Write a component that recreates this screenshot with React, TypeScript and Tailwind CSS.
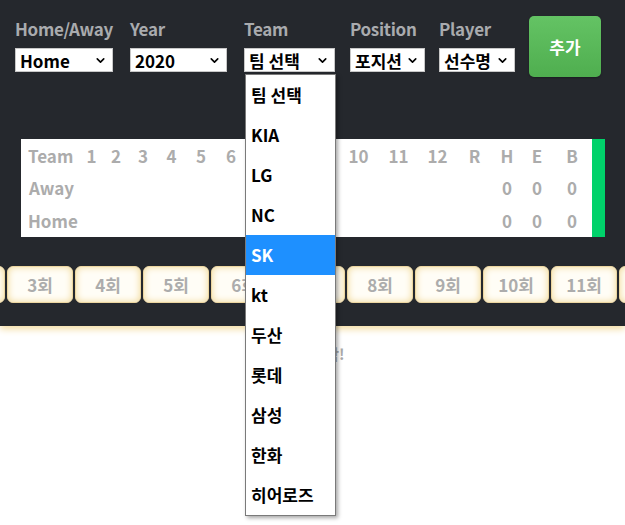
import { ChevronDown } from 'lucide-react'

const teams = ['팀 선택', 'KIA', 'LG', 'NC', 'SK', 'kt', '두산', '롯데', '삼성', '한화', '히어로즈']
const innings = ['1회', '2회', '3회', '4회', '5회', '6회', '7회', '8회', '9회', '10회', '11회', '12회']
const headers = ['1', '2', '3', '4', '5', '6', '7', '8', '9', '10', '11', '12', 'R', 'H', 'E', 'B']

const FakeSelect = ({ value }: { value: string }) => (
  <div className="w-full h-6 bg-white border border-[#c8c8c8] flex items-center justify-between pl-[4px] pr-[5px] text-black text-[17px] leading-none">
    <span>{value}</span>
    <ChevronDown size={13} strokeWidth={3} className="shrink-0" />
  </div>
)

const Field = ({ label, children, className }: { label: string; children: React.ReactNode; className: string }) => (
  <div className={`flex flex-col gap-[7px] shrink-0 ${className}`}>
    <span className="text-[17px] leading-[24px] text-[#a9abae] whitespace-nowrap tracking-[-0.3px]">{label}</span>
    {children}
  </div>
)

const App = () => {
  return (
    <div className="w-[625px] h-[525px] overflow-hidden bg-white font-['Noto_Sans_CJK_KR',sans-serif] font-bold">
      <div className="bg-[#25282d] h-[326px] shadow-[0_3px_7px_#f3dca0] relative">
        {/* filters */}
        <div className="flex items-start pl-[15px] pt-[17px]">
          <Field label="Home/Away" className="w-[98px] mr-[17px]">
            <FakeSelect value="Home" />
          </Field>
          <Field label="Year" className="w-[97px] mr-[17px]">
            <FakeSelect value="2020" />
          </Field>
          <Field label="Team" className="w-[91px] mr-[15px] relative z-20">
            <FakeSelect value="팀 선택" />
            <ul className="absolute left-[1px] top-[57px] w-[91px] bg-white border border-[#7a7a7a] shadow-[2px_2px_4px_rgba(0,0,0,0.35)]">
              {teams.map(t => (
                <li
                  key={t}
                  className={`h-10 flex items-center pl-[5px] text-[17px] ${t === 'SK' ? 'bg-[#1e90ff] text-white' : 'text-black'}`}
                >
                  {t}
                </li>
              ))}
            </ul>
          </Field>
          <Field label="Position" className="w-[75px] mr-[14px]">
            <FakeSelect value="포지션" />
          </Field>
          <Field label="Player" className="w-[76px] mr-[14px]">
            <FakeSelect value="선수명" />
          </Field>
          <button className="mt-[-1px] w-[72px] h-[61px] rounded-[5px] bg-gradient-to-b from-[#64c364] to-[#4fae4f] text-white text-[17px] shadow-[0_1px_2px_rgba(0,0,0,0.3)]">
            추가
          </button>
        </div>

        {/* scoreboard */}
        <div className="ml-[21px] mt-[62px] w-[584px] flex bg-white text-[#acacac] text-[17px]">
          <div className="grid grid-cols-[59px_23px_26px_28px_29px_30px_30px_29px_30px_33px_41px_39px_39px_35px_30px_30px_40px] auto-rows-[32.7px] items-center">
            <span className="pl-[7px]">Team</span>
            {headers.map(h => (
              <span key={h} className="text-center">{h}</span>
            ))}
            <span className="pl-[8px]">Away</span>
            {headers.map(h => (
              <span key={'a' + h} className="text-center">{['H', 'E', 'B'].includes(h) ? '0' : ''}</span>
            ))}
            <span className="pl-[7px]">Home</span>
            {headers.map(h => (
              <span key={'h' + h} className="text-center">{['H', 'E', 'B'].includes(h) ? '0' : ''}</span>
            ))}
          </div>
          <div className="w-[13px] bg-[#00d26a]" />
        </div>

        {/* innings tabs */}
        <div className="mt-[29px] overflow-hidden">
          <div className="flex gap-[2px] ml-[-129px] w-max">
            {innings.map(i => (
              <div
                key={i}
                className="w-[66px] h-[37px] shrink-0 rounded-[6px] bg-[#fffdf6] border border-[#ecd6a0] shadow-[inset_0_0_7px_#f1d895] flex items-center justify-center text-[17px] text-[#acacac]"
              >
                {i}
              </div>
            ))}
          </div>
        </div>
      </div>

      <p className="mt-[17px] text-center text-[15px] text-[#a9a9a9]">경기 시작!</p>
    </div>
  )
}

export default App
